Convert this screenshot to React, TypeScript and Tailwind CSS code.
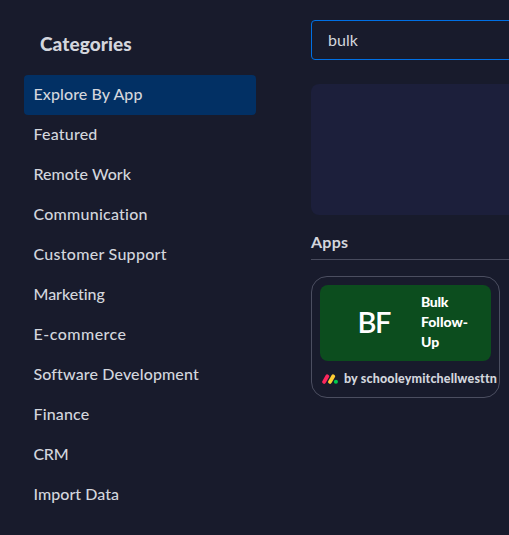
const categories = [
  { name: 'Explore By App', fit: 'tracking-[0.09px]' },
  { name: 'Featured', fit: 'tracking-[0.2px]' },
  { name: 'Remote Work', fit: 'tracking-[0.03px]' },
  { name: 'Communication', fit: 'tracking-[0.24px]' },
  { name: 'Customer Support', fit: 'tracking-[0.28px]' },
  { name: 'Marketing', fit: 'tracking-[-0.05px]' },
  { name: 'E-commerce', fit: 'tracking-[0.48px]' },
  { name: 'Software Development', fit: 'tracking-[0.13px]' },
  { name: 'Finance', fit: 'tracking-[0.15px]' },
  { name: 'CRM', fit: 'tracking-[-0.3px]' },
  { name: 'Import Data', fit: 'tracking-[0.04px]' },
];

function MondayLogo() {
  return (
    <svg width="16" height="10" viewBox="0 0 16 10" className="shrink-0" fill="none" strokeLinecap="round" strokeWidth="3.8">
      <path d="M2.1 7.9 5.3 2.3" stroke="#fb275d" />
      <path d="M8 7.9 11.2 2.3" stroke="#fc3" />
      <circle cx="13.9" cy="7.8" r="2.05" fill="#00ca4e" />
    </svg>
  );
}

export default function App() {
  return (
    <div className="flex h-[535px] w-[509px] overflow-hidden bg-[#181b2c] font-['Lato',sans-serif] text-[#d3d6dd] antialiased [font-variant-ligatures:none]">
      <aside className="ml-6 w-[232px] shrink-0">
        <h2 className="mt-[31px] ml-4 h-11 text-[19px] leading-[26px] font-black tracking-[0.08px]">
          <span>Categories</span>
        </h2>
        <nav>
          {categories.map((c, i) => (
            <div key={c.name} className={`flex h-10 items-center rounded px-[9.5px] pb-0.5 text-base font-medium ${i === 0 ? 'bg-[#023064]' : ''}`}>
              <span className={c.fit}>{c.name}</span>
            </div>
          ))}
        </nav>
      </aside>
      <main className="ml-[55px] w-[600px] shrink-0 pt-5">
        <div className="flex h-10 items-center rounded border border-[#0070e5] pl-4 text-base">
          <span>bulk</span>
        </div>
        <div className="mt-6 h-[131px] rounded-lg bg-[#1c1f3b]" />
        <h3 className="mt-[15px] h-[30px] border-b border-[#484b5d] text-base leading-6 font-bold tracking-[0.25px]">
          <span>Apps</span>
        </h3>
        <article className="mt-4 h-[122px] w-[189px] rounded-2xl border border-[#4b4e60] p-2">
          <div className="flex h-[76px] rounded-lg bg-[#0c4d1e] text-white">
            <div className="flex w-[101px] items-center pb-0.5 pl-[37.5px] text-[29px] font-semibold tracking-[-1.4px]">
              <span>BF</span>
            </div>
            <div className="pt-[7px] text-sm leading-5 font-black">
              <div className="tracking-[-0.3px]"><span>Bulk</span></div>
              <div><span>Follow-</span></div>
              <div><span>Up</span></div>
            </div>
          </div>
          <div className="ml-0.5 flex h-9 items-center gap-1.5 text-[12.5px] font-black tracking-[0.16px] whitespace-nowrap">
            <MondayLogo />
            <span>by schooleymitchellwesttn</span>
          </div>
        </article>
      </main>
    </div>
  );
}
